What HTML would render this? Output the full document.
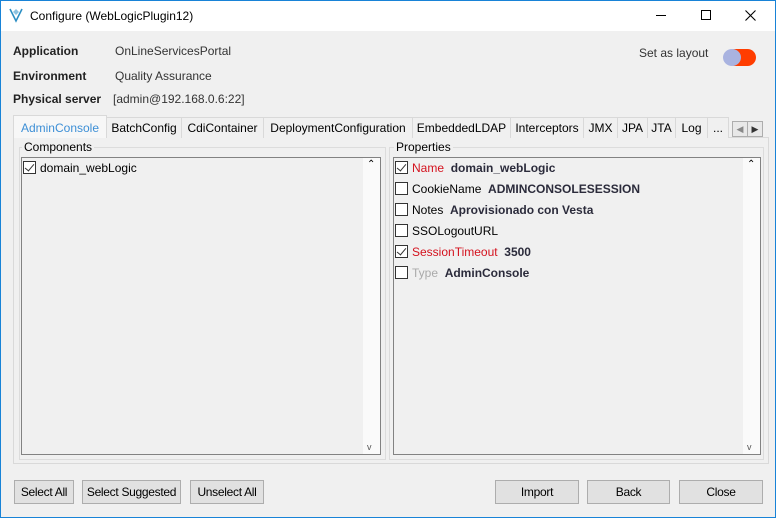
<!DOCTYPE html>
<html><head><style>
*{box-sizing:border-box;margin:0;padding:0}
body{width:776px;height:518px;background:#f0f0f0;font-family:"Liberation Sans",sans-serif;font-size:12px;color:#000;position:relative;overflow:hidden}
.a{position:absolute;white-space:nowrap}
.win{position:absolute;left:0;top:0;width:776px;height:518px;border:1px solid #1883d7}
.title{position:absolute;left:1px;top:1px;width:774px;height:30px;background:#fff}
.lbl{font-weight:bold;color:#222}
.tab{position:absolute;top:117px;height:21px;border:1px solid #d9d9d9;border-bottom:none;background:#f0f0f0;padding:3px 0 0;text-align:center;font-size:12px}
.box{position:absolute;border:1px solid #dcdcdc}
.list{position:absolute;border:1px solid #828282;background:#f0f0f0}
.sb{position:absolute;top:0;right:0;width:17px;bottom:0;background:#fafafa}
.cb{display:inline-block;width:13px;height:13px;border:1px solid #333;background:#fff;vertical-align:-2px;margin-right:4px;position:relative}
.cb.c::after{content:"";position:absolute;left:3px;top:0px;width:4px;height:8px;border:solid #333;border-width:0 1.5px 1.5px 0;transform:rotate(40deg)}
.row{position:absolute;left:3px;height:20px}
.red{color:#d4121e}
.b{font-weight:bold;color:#2b2b3b}
.btn{position:absolute;top:480px;height:24px;border:1px solid #adadad;background:#e1e1e1;text-align:center;padding-top:4px;letter-spacing:-0.3px}
</style></head><body>
<div class="win"></div>
<div class="title"></div>
<svg class="a" style="left:9px;top:7px" width="14" height="16" viewBox="0 0 14 16"><path d="M1 2 L7 14 L13 2" fill="none" stroke="#2d8fc4" stroke-width="1.6"/><path d="M4 5 L7 2 L10 5 L7 8Z" fill="#8bc2e0"/></svg>
<div class="a" style="left:30px;top:9px;font-size:12px">Configure (WebLogicPlugin12)</div>
<div class="a" style="left:656px;top:15px;width:10px;height:1px;background:#000"></div>
<div class="a" style="left:701px;top:10px;width:10px;height:10px;border:1px solid #000"></div>
<svg class="a" style="left:745px;top:10px" width="11" height="11" viewBox="0 0 11 11"><path d="M0.5 0.5L10.5 10.5M10.5 0.5L0.5 10.5" stroke="#000" stroke-width="1.1"/></svg>

<div class="a lbl" style="left:13px;top:44px">Application</div>
<div class="a" style="left:115px;top:44px;color:#333">OnLineServicesPortal</div>
<div class="a lbl" style="left:13px;top:69px">Environment</div>
<div class="a" style="left:115px;top:69px;color:#333">Quality Assurance</div>
<div class="a lbl" style="left:13px;top:92px">Physical server</div>
<div class="a" style="left:113px;top:92px;color:#333">[admin@192.168.0.6:22]</div>
<div class="a" style="left:639px;top:46px;color:#333">Set as layout</div>
<div class="a" style="left:727px;top:49px;width:29px;height:17px;border-radius:9px;background:#ff3d00"></div>
<div class="a" style="left:723px;top:49px;width:18px;height:17px;border-radius:50%;background:#a9b3e0"></div>

<div class="a" style="left:13px;top:137px;width:756px;height:327px;border:1px solid #d9d9d9;background:#f0f0f0"></div>
<div class="tab" style="left:13px;width:94px;top:115px;height:23px;background:#f7f7f7;color:#3d8fd6;padding-top:5px">AdminConsole</div>
<div class="tab" style="left:106px;width:76px">BatchConfig</div>
<div class="tab" style="left:181px;width:83px">CdiContainer</div>
<div class="tab" style="left:263px;width:150px">DeploymentConfiguration</div>
<div class="tab" style="left:412px;width:99px">EmbeddedLDAP</div>
<div class="tab" style="left:510px;width:74px">Interceptors</div>
<div class="tab" style="left:583px;width:35px">JMX</div>
<div class="tab" style="left:617px;width:31px">JPA</div>
<div class="tab" style="left:647px;width:29px">JTA</div>
<div class="tab" style="left:675px;width:33px">Log</div>
<div class="tab" style="left:707px;width:22px">...</div>
<div class="a" style="left:732px;top:121px;width:16px;height:16px;border:1px solid #adadad;background:#e8e8e8;color:#888;font-size:9px;text-align:center;line-height:14px">◀</div>
<div class="a" style="left:747px;top:121px;width:16px;height:16px;border:1px solid #adadad;background:#e8e8e8;color:#333;font-size:9px;text-align:center;line-height:14px">▶</div>

<div class="box" style="left:19px;top:147px;width:367px;height:313px"></div>
<div class="a" style="left:22px;top:140px;background:#f0f0f0;padding:0 2px">Components</div>
<div class="list" style="left:21px;top:157px;width:360px;height:298px">
 <div class="sb"><div class="a" style="left:4px;top:1px;font-size:10px">⌃</div><div class="a" style="left:4px;bottom:2px;font-size:9px;color:#555">v</div></div>
 <div class="row" style="top:3px;left:1px"><span class="cb c"></span>domain_webLogic</div>
</div>

<div class="box" style="left:389px;top:147px;width:375px;height:313px"></div>
<div class="a" style="left:394px;top:140px;background:#f0f0f0;padding:0 2px">Properties</div>
<div class="list" style="left:393px;top:157px;width:368px;height:298px">
 <div class="sb"><div class="a" style="left:4px;top:1px;font-size:10px">⌃</div><div class="a" style="left:4px;bottom:2px;font-size:9px;color:#555">v</div></div>
 <div class="row" style="top:3px;left:1px"><span class="cb c"></span><span class="red">Name</span>&nbsp; <span class="b">domain_webLogic</span></div>
 <div class="row" style="top:24px;left:1px"><span class="cb"></span>CookieName&nbsp; <span class="b">ADMINCONSOLESESSION</span></div>
 <div class="row" style="top:45px;left:1px"><span class="cb"></span>Notes&nbsp; <span class="b">Aprovisionado con Vesta</span></div>
 <div class="row" style="top:66px;left:1px"><span class="cb"></span>SSOLogoutURL</div>
 <div class="row" style="top:87px;left:1px"><span class="cb c"></span><span class="red">SessionTimeout</span>&nbsp; <span class="b">3500</span></div>
 <div class="row" style="top:108px;left:1px"><span class="cb"></span><span style="color:#aaa">Type</span>&nbsp; <span class="b">AdminConsole</span></div>
</div>

<div class="btn" style="left:14px;width:60px">Select All</div>
<div class="btn" style="left:82px;width:99px">Select Suggested</div>
<div class="btn" style="left:190px;width:74px">Unselect All</div>
<div class="btn" style="left:495px;width:84px">Import</div>
<div class="btn" style="left:587px;width:83px">Back</div>
<div class="btn" style="left:679px;width:84px">Close</div>
</body></html>
